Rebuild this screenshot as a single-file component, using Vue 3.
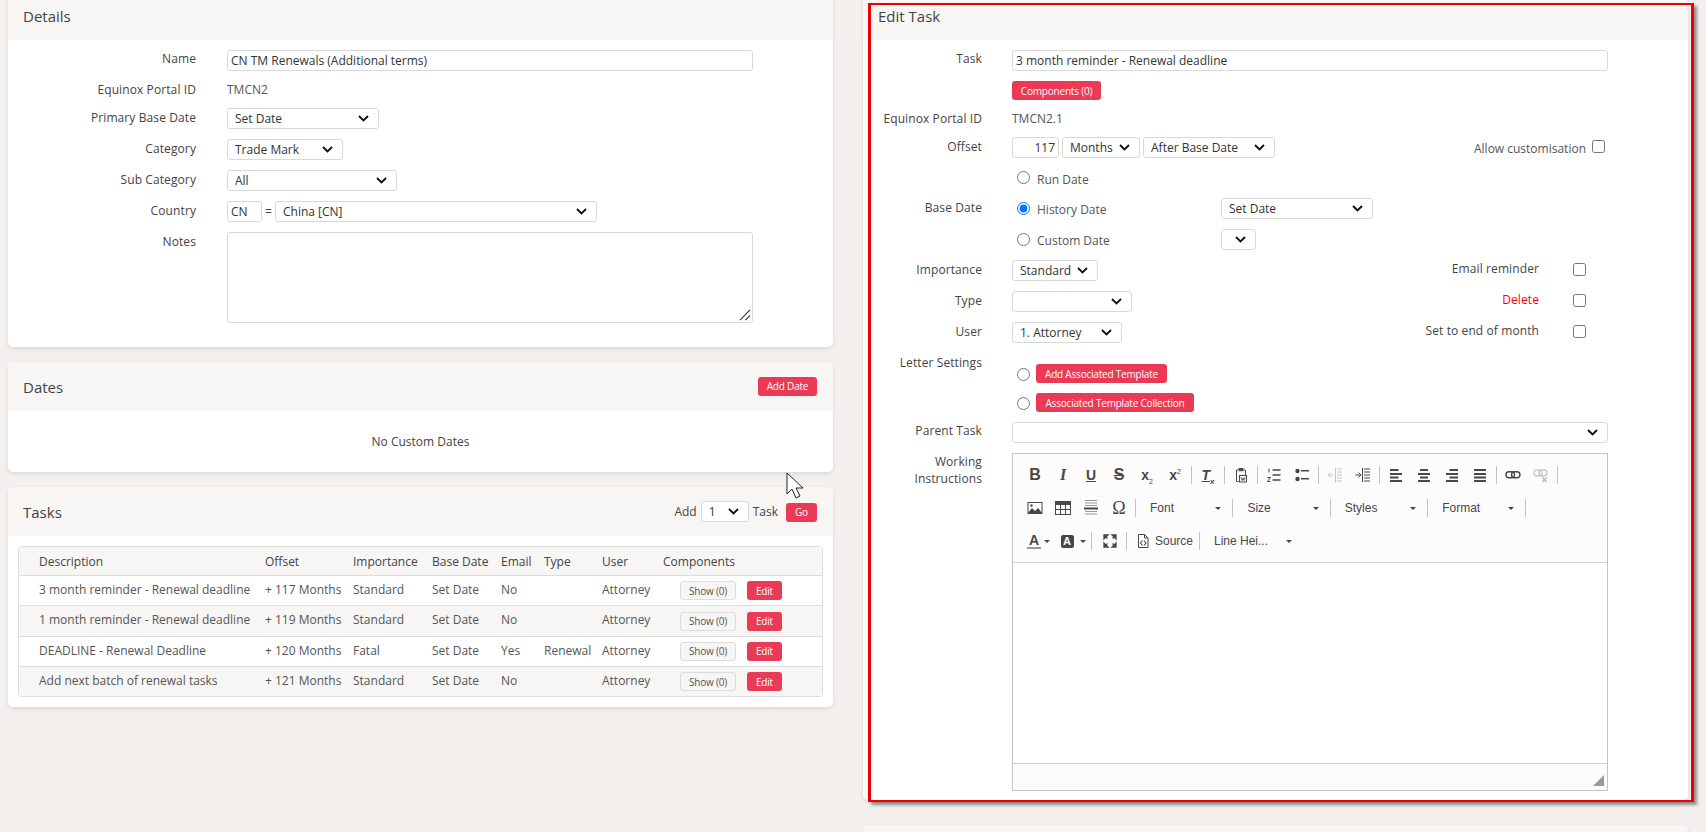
<script setup>
const tasks = [
  { d: '3 month reminder - Renewal deadline', o: '+ 117 Months', i: 'Standard', e: 'No', t: '' },
  { d: '1 month reminder - Renewal deadline', o: '+ 119 Months', i: 'Standard', e: 'No', t: '' },
  { d: 'DEADLINE - Renewal Deadline', o: '+ 120 Months', i: 'Fatal', e: 'Yes', t: 'Renewal' },
  { d: 'Add next batch of renewal tasks', o: '+ 121 Months', i: 'Standard', e: 'No', t: '' },
]
</script>

<template>
  <div class="page">
    <div class="col">
      <section class="card">
        <header class="head"><h2>Details</h2></header>
        <div class="body left-form">
          <div class="row"><label>Name</label><input class="inp wide" value="CN TM Renewals (Additional terms)" /></div>
          <div class="row short"><label>Equinox Portal ID</label><span class="val">TMCN2</span></div>
          <div class="row"><label>Primary Base Date</label><select class="sel" style="width:152px"><option>Set Date</option></select></div>
          <div class="row"><label>Category</label><select class="sel" style="width:116px"><option>Trade Mark</option></select></div>
          <div class="row"><label>Sub Category</label><select class="sel" style="width:170px"><option>All</option></select></div>
          <div class="row"><label>Country</label><input class="inp cc" value="CN" /><span class="eq">=</span><select class="sel" style="width:322px"><option>China [CN]</option></select></div>
          <div class="row">
            <label class="nudge">Notes</label>
            <div class="notes-wrap">
              <textarea class="notes"></textarea>
              <svg class="grip" viewBox="0 0 13 13" fill="none" stroke="#333" stroke-width="1.2"><path d="M1 12L12 1M7 12l5-5" /></svg>
            </div>
          </div>
        </div>
      </section>

      <section class="card">
        <header class="head"><h2>Dates</h2><button class="btn">Add Date</button></header>
        <div class="empty">No Custom Dates</div>
      </section>

      <section class="card">
        <header class="head">
          <h2>Tasks</h2>
          <div class="add">
            <span>Add</span><select class="sel" style="width:48px"><option>1</option></select><span>Task</span><button class="btn go">Go</button>
          </div>
        </header>
        <div class="tbody">
          <table>
            <colgroup>
              <col style="width:246px" /><col style="width:88px" /><col style="width:79px" /><col style="width:69px" />
              <col style="width:43px" /><col style="width:58px" /><col style="width:61px" /><col />
            </colgroup>
            <thead>
              <tr><th class="first">Description</th><th>Offset</th><th>Importance</th><th>Base Date</th><th>Email</th><th>Type</th><th>User</th><th>Components</th></tr>
            </thead>
            <tbody>
              <tr v-for="t in tasks" :key="t.d">
                <td class="first">{{ t.d }}</td><td>{{ t.o }}</td><td>{{ t.i }}</td><td>Set Date</td><td>{{ t.e }}</td><td>{{ t.t }}</td><td>Attorney</td>
                <td class="acts"><button class="show">Show (0)</button><button class="btn edit">Edit</button></td>
              </tr>
            </tbody>
          </table>
        </div>
      </section>
    </div>

    <div class="col">
      <section class="card edit-card">
        <header class="head"><h2>Edit Task</h2></header>
        <div class="body right-form">
          <div class="row"><label>Task</label><input class="inp full" value="3 month reminder - Renewal deadline" /></div>
          <div class="row compact"><label></label><button class="btn comps">Components (0)</button></div>
          <div class="row id"><label>Equinox Portal ID</label><span class="val">TMCN2.1</span></div>
          <div class="row spread">
            <label>Offset</label>
            <input class="inp num" value="117" />
            <select class="sel s1" style="width:78px"><option>Months</option></select>
            <select class="sel s1" style="width:132px"><option>After Base Date</option></select>
            <span class="allow">Allow customisation<input type="checkbox" /></span>
          </div>
          <div class="row radio-row"><label></label><input type="radio" name="b" /><span class="rl">Run Date</span></div>
          <div class="row">
            <label>Base Date</label><input type="radio" name="b" checked /><span class="rl w">History Date</span>
            <select class="sel" style="width:152px"><option>Set Date</option></select>
          </div>
          <div class="row">
            <label></label><input type="radio" name="b" /><span class="rl w">Custom Date</span>
            <select class="sel" style="width:35px"></select>
          </div>
          <div class="row flag">
            <label>Importance</label><select class="sel" style="width:86px"><option>Standard</option></select>
            <span class="fl">Email reminder</span><input type="checkbox" />
          </div>
          <div class="row flag">
            <label>Type</label><select class="sel" style="width:120px"></select>
            <span class="fl red">Delete</span><input type="checkbox" />
          </div>
          <div class="row flag">
            <label>User</label><select class="sel" style="width:110px"><option>1. Attorney</option></select>
            <span class="fl">Set to end of month</span><input type="checkbox" />
          </div>
          <div class="row letter">
            <label class="nudge">Letter Settings</label>
            <div class="tpl">
              <div class="tpl-row"><input type="radio" name="l" /><button class="btn tb" style="width:131px">Add Associated Template</button></div>
              <div class="tpl-row"><input type="radio" name="l" /><button class="btn tb" style="width:158px">Associated Template Collection</button></div>
            </div>
          </div>
          <div class="row"><label>Parent Task</label><select class="sel full"></select></div>
          <div class="row ed-row">
            <label>Working<br />Instructions</label>
            <div class="editor">
              <div class="tools">
                <div class="tool-row">
                  <span class="i"><b class="g b">B</b></span>
                  <span class="i"><i class="g it">I</i></span>
                  <span class="i"><b class="g u">U</b></span>
                  <span class="i"><b class="g s">S</b></span>
                  <span class="i"><b class="g sc">x<sub>2</sub></b></span>
                  <span class="i"><b class="g sc">x<sup>2</sup></b></span>
                  <span class="sep"></span>
                  <span class="i"><i class="g tx">T<sub>x</sub></i></span>
                  <span class="sep"></span>
                  <span class="i">
                    <svg viewBox="0 0 16 16" fill="none" stroke="#474747"><path d="M5 3H3.5v11.5h2M11 3h1.5v5" /><rect x="5.5" y="1" width="5" height="3.2" fill="#474747" stroke="none" /><rect x="6.5" y="8.5" width="7" height="6.5" /><path d="M8 10l1 3.5 1-2.5 1 2.5 1-3.5" stroke-width=".8" /></svg>
                  </span>
                  <span class="sep"></span>
                  <span class="i">
                    <svg viewBox="0 0 16 16" fill="none" stroke="#474747"><path d="M6.5 3h8M6.5 8h8M6.5 13h8" stroke-width="1.3" /><path d="M3 1.5v4M1.5 10.5h3l-3 4h3" stroke-width="1" /></svg>
                  </span>
                  <span class="i">
                    <svg viewBox="0 0 16 16" fill="#474747"><circle cx="3.5" cy="4" r="2.2" /><circle cx="3.5" cy="12" r="2.2" /><rect x="7" y="3" width="8" height="1.5" /><rect x="7" y="11" width="8" height="1.5" /></svg>
                  </span>
                  <span class="sep"></span>
                  <span class="i">
                    <svg viewBox="0 0 16 16" fill="none" stroke="#c4c4c4"><path d="M8.5 1v14M10 2h5M10 5h5M10 8h5M10 11h5M10 14h5M6.5 8H1M3.5 5.5L1 8l2.5 2.5" stroke-width="1" /></svg>
                  </span>
                  <span class="i">
                    <svg viewBox="0 0 16 16" fill="none" stroke="#474747"><path d="M7.5 1v14M9 2h6M9 5h6M9 8h6M9 11h6M9 14h6M0.5 8H5.5M3.5 5.5L6 8l-2.5 2.5" stroke-width="1" /></svg>
                  </span>
                  <span class="sep"></span>
                  <span class="i"><svg viewBox="0 0 16 16" fill="#474747"><rect x="2" y="2" width="8.5" height="2" /><rect x="2" y="6" width="12" height="2" /><rect x="2" y="9.5" width="8.5" height="2" /><rect x="2" y="13" width="12" height="2" /></svg></span>
                  <span class="i"><svg viewBox="0 0 16 16" fill="#474747"><rect x="4" y="2" width="8" height="2" /><rect x="2" y="6" width="12" height="2" /><rect x="4" y="9.5" width="8" height="2" /><rect x="2" y="13" width="12" height="2" /></svg></span>
                  <span class="i"><svg viewBox="0 0 16 16" fill="#474747"><rect x="5.5" y="2" width="8.5" height="2" /><rect x="2" y="6" width="12" height="2" /><rect x="5.5" y="9.5" width="8.5" height="2" /><rect x="2" y="13" width="12" height="2" /></svg></span>
                  <span class="i"><svg viewBox="0 0 16 16" fill="#474747"><rect x="2" y="2" width="12" height="2" /><rect x="2" y="6" width="12" height="2" /><rect x="2" y="9.5" width="12" height="2" /><rect x="2" y="13" width="12" height="2" /></svg></span>
                  <span class="sep"></span>
                  <span class="i"><svg viewBox="0 0 16 16" fill="none" stroke="#474747" stroke-width="1.4"><rect x="1" y="4.8" width="8.5" height="6" rx="3" /><rect x="6.5" y="4.8" width="8.5" height="6" rx="3" /></svg></span>
                  <span class="i"><svg viewBox="0 0 16 16" fill="none" stroke="#c8c8c8" stroke-width="1.4"><rect x="1" y="3" width="8" height="6" rx="3" /><rect x="6" y="3" width="8" height="6" rx="3" /><path d="M9.5 10.5l4 4.5M13.5 10.5l-4 4.5" stroke="#b8b8b8" /></svg></span>
                  <span class="sep"></span>
                </div>
                <div class="tool-row">
                  <span class="i"><svg viewBox="0 0 16 16" fill="none"><rect x="1" y="2.5" width="14" height="11" stroke="#474747" /><path d="M1 13l4-5 3 3 3-3 4 5z" fill="#474747" /><circle cx="4.5" cy="5.5" r="1.2" fill="#474747" /></svg></span>
                  <span class="i"><svg viewBox="0 0 16 16" fill="none" stroke="#474747"><rect x=".5" y="1.5" width="15" height="13" /><rect x=".5" y="1.5" width="15" height="3" fill="#474747" /><path d="M5.5 4.5v10M10.5 4.5v10M.5 9.5h15" /></svg></span>
                  <span class="i"><svg viewBox="0 0 16 16" fill="#474747"><rect x="2" y="0" width="12" height="1" fill="#999" /><rect x="2" y="2.5" width="12" height="1" fill="#999" /><rect x="2" y="5" width="12" height="1" fill="#999" /><rect x="1" y="7.5" width="14" height="2" /><rect x="2" y="11" width="12" height="1" fill="#999" /><rect x="2" y="13.5" width="12" height="1" fill="#999" /></svg></span>
                  <span class="i"><span class="g om">Ω</span></span>
                  <span class="sep"></span>
                  <span class="combo"><em>Font</em><u></u></span>
                  <span class="sep"></span>
                  <span class="combo"><em>Size</em><u></u></span>
                  <span class="sep"></span>
                  <span class="combo"><em>Styles</em><u></u></span>
                  <span class="sep"></span>
                  <span class="combo"><em>Format</em><u></u></span>
                  <span class="sep"></span>
                </div>
                <div class="tool-row">
                  <span class="i a1"><b class="g col-a">A</b></span><u class="caret small"></u>
                  <span class="i a2"><b class="g bg-a">A</b></span><u class="caret small"></u>
                  <span class="sep s3"></span>
                  <span class="i"><svg viewBox="0 0 16 16" fill="#474747" stroke="#474747" stroke-width="1.3"><path d="M2 2h4L2 6zM14 2v4l-4-4zM2 14v-4l4 4zM14 14h-4l4-4z" /><path d="M2.5 2.5l3 3M13.5 2.5l-3 3M2.5 13.5l3-3M13.5 13.5l-3-3" /></svg></span>
                  <span class="sep"></span>
                  <span class="i src"><svg viewBox="0 0 16 16" fill="none" stroke="#474747"><path d="M3.5 1.5h6l3.5 3.5v9.5h-9.5zM9.5 1.5V5H13" /><path d="M7.5 7.5L5.5 10l2 2.5M9 7.5l2 2.5-2 2.5" stroke-width="1.1" /></svg></span>
                  <span class="txt">Source</span>
                  <span class="sep"></span>
                  <span class="combo line"><em>Line Hei...</em><u></u></span>
                </div>
              </div>
              <div class="area"></div>
              <div class="foot"><svg viewBox="0 0 11 11"><path d="M11 0v11H0z" fill="#9a9a9a" /></svg></div>
            </div>
          </div>
        </div>
      </section>
      <section class="card next"></section>
    </div>

    <div class="annot"></div>
    <svg class="cursor" viewBox="0 0 19 27"><path d="M1 1v21l5-5 4 9 4-2-4-8h7z" fill="#fff" stroke="#222" stroke-width="1" /></svg>
  </div>
</template>

<style>
html, body { margin: 0; background: #f2efec; overflow: hidden; }
</style>

<style scoped>
.page {
  position: relative;
  box-sizing: border-box;
  height: 832px;
  overflow: hidden;
  display: grid;
  grid-template-columns: 825px 825px;
  column-gap: 30px;
  padding-left: 8px;
  align-items: start;
  font-family: "Open Sans", sans-serif;
  font-size: 12px;
  color: #444;
  background: #f2efec;
}
.col { display: flex; flex-direction: column; gap: 15px; margin-top: -9px; }
.card {
  background: #fff;
  border-radius: 5px;
  box-shadow: 0 2px 4px rgba(0, 0, 0, .09);
  flex: none;
}
.head {
  height: 49px;
  background: #f7f6f5;
  border-radius: 5px 5px 0 0;
  display: flex;
  align-items: center;
  justify-content: space-between;
  padding: 0 16px 0 15px;
  box-sizing: border-box;
}
h2 { margin: 0; font-size: 15px; font-weight: 400; color: #444; }
.body { padding-top: 10px; }
.left-form { height: 307px; box-sizing: border-box; }
.edit-card { height: 809px; }
.next { margin-top: 10px; height: 60px; background: #f7f6f5; }

.row { display: flex; align-items: flex-start; margin-bottom: 10px; }
.row > label { flex: none; text-align: right; line-height: 18px; color: #444; letter-spacing: .1px; }
.row:has(> .sel:not(.full)) > label, .row > label.nudge { padding-top: 1px; }
.left-form .row > label { width: 188px; margin-right: 31px; }
.right-form .row > label { width: 119px; margin-right: 30px; }
.row.short { height: 17px; }
.val { line-height: 18px; color: #555; }

.inp, .sel, .notes {
  box-sizing: border-box;
  height: 21px;
  border: 1px solid #d9d9d9;
  border-radius: 3px;
  background-color: #fff;
  font-family: "Open Sans", sans-serif;
  font-size: 12px;
  color: #333;
  padding: 0 3px;
  margin: 0;
  outline: none;
}
.sel {
  appearance: none;
  -webkit-appearance: none;
  padding: 0 22px 0 7px;
  background-image: url("data:image/svg+xml,%3Csvg xmlns='http://www.w3.org/2000/svg' width='11' height='7' viewBox='0 0 11 7'%3E%3Cpath d='M1 1l4.5 4.5L10 1' fill='none' stroke='%23111' stroke-width='1.9'/%3E%3C/svg%3E");
  background-repeat: no-repeat;
  background-position: right 9px center;
  flex: none;
}
.wide { width: 526px; }
.full { width: 596px; }
.cc { width: 35px; }
.eq { width: 13px; text-align: center; line-height: 21px; flex: none; }
.notes-wrap { position: relative; width: 526px; height: 91px; }
.notes { width: 526px; height: 91px; display: block; resize: none; }
.grip { position: absolute; right: 2px; bottom: 2px; width: 12px; height: 12px; }

.btn {
  border: 0;
  border-radius: 3px;
  background: #eb3a55;
  color: #fff;
  font-family: "Open Sans", sans-serif;
  font-size: 10px;
  letter-spacing: -.2px;
  height: 19px;
  padding: 0;
  flex: none;
}
.head > .btn { width: 59px; margin-top: -1px; }

.empty { height: 61px; text-align: center; line-height: 62px; color: #444; }

.add { display: flex; align-items: center; gap: 4px; font-size: 12px; }
.add .btn.go { width: 31px; margin-left: 4px; margin-top: 1px; }
.tbody { padding: 10px; }
table {
  width: 805px;
  table-layout: fixed;
  border-collapse: separate;
  border-spacing: 0;
  border: 1px solid #ddd;
  border-radius: 4px;
  background: #fff;
  font-size: 12px;
}
th { font-weight: 400; text-align: left; height: 28px; padding: 0; background: #f7f6f5; color: #444; border-bottom: 1px solid #ddd; }
td { height: 27.25px; padding: 0 0 2px; border-bottom: 1px solid #ddd; color: #555; white-space: nowrap; }
thead th:first-child { border-top-left-radius: 4px; }
thead th:last-child { border-top-right-radius: 4px; }
tbody tr:nth-child(even) td { background: #f7f6f5; }
tbody tr:last-child td { border-bottom: 0; }
.first { padding-left: 20px; }
td.acts { padding: 0 0 0 17px; height: 29.25px; }
.acts button { vertical-align: middle; }
.show {
  width: 56px;
  height: 19px;
  box-sizing: border-box;
  border: 1px solid #ddd;
  border-radius: 3px;
  background: #f7f6f5;
  font-family: "Open Sans", sans-serif;
  font-size: 10px;
  letter-spacing: -.2px;
  color: #555;
  padding: 0;
  margin-right: 11px;
}
.edit { width: 35px; }

.comps { width: 89px; }
.row.compact { margin-bottom: 10px; }
.row.id { height: 18px; margin-bottom: 9px; }
.num { width: 47px; text-align: right; margin-right: 3px; }
.s1 { margin-right: 3px; }
.allow { margin-left: auto; margin-right: 83px; display: flex; align-items: flex-start; line-height: 24px; color: #555; height: 21px; }
.allow input { margin: 3px 0 0 6px; }
input[type="checkbox"], input[type="radio"] { flex: none; width: 13px; height: 13px; }
.radio-row { height: 20px; }
.right-form input[type="radio"] { margin: 4px 0 0 5px; }
.radio-row input[type="radio"] { margin-top: 3px; }
.rl { margin-left: 7px; height: 21px; line-height: 24px; color: #555; }
.rl.w { width: 184px; flex: none; }
.flag .fl { margin-left: auto; line-height: 18px; color: #444; letter-spacing: .1px; }
.flag input { margin: 3px 102px 0 34px; }
.red { color: #f00 !important; }
.letter { margin-bottom: 10px; }
.tpl { display: flex; flex-direction: column; gap: 10px; padding-top: 11px; }
.tpl-row { display: flex; align-items: center; height: 19px; }
.right-form .tpl-row input[type="radio"] { margin: 2px 6px 0 5px; }
.ed-row label { line-height: 17px !important; }

.editor { width: 596px; height: 338px; box-sizing: border-box; border: 1px solid #c4c4c4; display: flex; flex-direction: column; font-family: "Liberation Sans", sans-serif; }
.tools { height: 109px; box-sizing: border-box; background: #fcfcfc; border-bottom: 1px solid #d1d1d1; padding: 6px 0 0 8px; flex: none; }
.tool-row { display: flex; align-items: center; height: 30px; margin-bottom: 3px; color: #474747; }
.tool-row:last-child { margin-bottom: 0; }
.i { width: 28px; height: 18px; flex: none; display: flex; align-items: center; justify-content: center; }
.i svg { width: 16px; height: 16px; display: block; }
.a1 { width: 22px; margin-left: 2px; margin-right: -1px; }
.a2 { width: 28px; margin-left: 1px; margin-right: -1px; }
.sep { width: 1px; height: 18px; background: #c4c4c4; flex: none; margin: 0 2px; }
.s3 { margin-left: 3px; margin-right: 4px; }
.g { font-family: "Liberation Sans", sans-serif; color: #474747; line-height: 16px; font-style: normal; }
.b { font-size: 16px; font-weight: 700; }
.it { font-family: "Liberation Serif", serif; font-style: italic; font-weight: 700; font-size: 16px; }
.u { font-size: 14px; text-decoration: underline; }
.s { font-size: 16px; font-weight: 700; text-decoration: line-through; }
.sc { font-size: 14px; }
.sc sub, .sc sup { font-size: 7px; font-weight: 400; line-height: 0; }
.tx { font-family: "Liberation Sans", sans-serif; font-style: italic; font-weight: 700; font-size: 14px; text-decoration: underline; text-underline-offset: 1px; }
.tx sub { font-size: 8px; line-height: 0; display: inline-block; text-decoration: none; }
.om { font-family: "Liberation Serif", serif; font-size: 18px; }
.combo { width: 92.4px; display: flex; align-items: center; justify-content: space-between; box-sizing: border-box; height: 18px; padding: 0 9px 0 12px; flex: none; }
.combo em { font-style: normal; font-size: 12px; color: #474747; }
.combo u, .caret { display: block; width: 0; height: 0; border-left: 3.5px solid transparent; border-right: 3.5px solid transparent; border-top: 3px solid #474747; text-decoration: none; flex: none; }
.caret.small { margin-right: 2px; }
.col-a { font-size: 14px; border-bottom: 2px solid #999; line-height: 14px; padding: 0 2px; }
.bg-a { background: #474747; color: #fff; font-size: 11px; line-height: 13px; width: 13px; text-align: center; border-radius: 2px; }
.src { width: 24px; margin-left: 2px; }
.txt { width: 42px; flex: none; font-size: 12px; color: #474747; }
.combo.line { width: 100px; padding-left: 12px; padding-right: 10px; }
.area { flex: 1; background: #fff; }
.foot { height: 27px; flex: none; box-sizing: border-box; background: #fbfbfb; border-top: 1px solid #d1d1d1; display: flex; justify-content: flex-end; align-items: flex-end; padding: 0 3px 4px 0; }
.foot svg { width: 11px; height: 11px; }

.annot {
  position: absolute;
  left: 868px;
  top: 3px;
  width: 826px;
  height: 799px;
  box-sizing: border-box;
  border: solid #ee0000;
  border-width: 2px 3px;
  box-shadow: 3px 3px 3px rgba(0, 0, 0, .4);
  pointer-events: none;
}
.cursor { position: absolute; left: 786px; top: 472px; width: 19px; height: 27px; }
</style>
